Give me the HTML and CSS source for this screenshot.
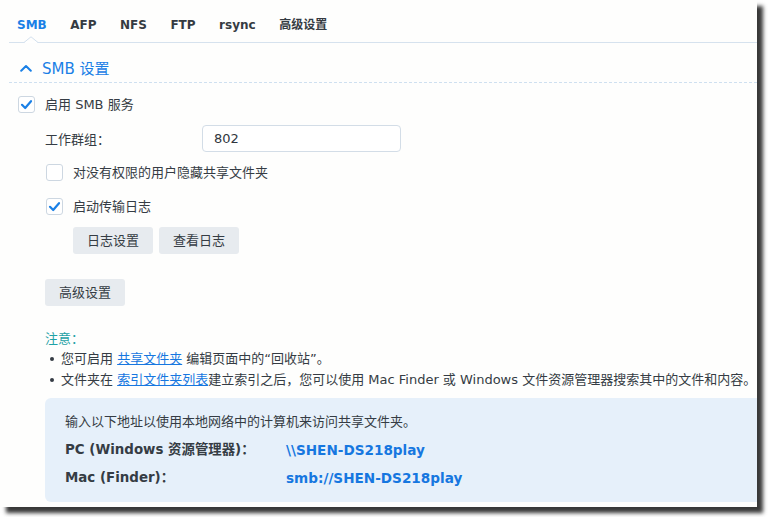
FILE: index.html
```html
<!DOCTYPE html>
<html lang="zh-CN">
<head>
<meta charset="utf-8">
<title>SMB</title>
<link rel="stylesheet" href="styles.css">
</head>
<body>
<div class="window">
  <div class="tabs">
    <span class="tab active">SMB</span>
    <span class="tab">AFP</span>
    <span class="tab">NFS</span>
    <span class="tab">FTP</span>
    <span class="tab">rsync</span>
    <span class="tab">高级设置</span>
    <svg class="notch" width="14" height="7" viewBox="0 0 14 7"><rect x="0.5" y="5.5" width="13" height="1.5" fill="#fff"/><polyline points="0,6.5 7,0.8 14,6.5" fill="none" stroke="#d3e0ee" stroke-width="1"/></svg>
  </div>
  <div class="section-head">
    <svg class="chev" width="12" height="8" viewBox="0 0 12 8"><polyline points="1.2,6.8 6,2 10.8,6.8" fill="none" stroke="#1a80e6" stroke-width="2" stroke-linecap="round" stroke-linejoin="round"/></svg>
    <span>SMB 设置</span>
  </div>
  <div class="content">
    <div class="check-row top">
      <span class="cb"><svg width="17" height="17" viewBox="0 0 17 17"><polyline points="4,8.8 7.2,12 13,5.2" fill="none" stroke="#1a80e6" stroke-width="2.2" stroke-linecap="round" stroke-linejoin="round"/></svg></span>
      <span>启用 SMB 服务</span>
    </div>
    <div class="indent">
      <div class="field-row">
        <span class="field-label">工作群组：</span>
        <div class="input">802</div>
      </div>
      <div class="check-row sub1">
        <span class="cb"></span>
        <span>对没有权限的用户隐藏共享文件夹</span>
      </div>
      <div class="check-row sub2">
        <span class="cb"><svg width="17" height="17" viewBox="0 0 17 17"><polyline points="4,8.8 7.2,12 13,5.2" fill="none" stroke="#1a80e6" stroke-width="2.2" stroke-linecap="round" stroke-linejoin="round"/></svg></span>
        <span>启动传输日志</span>
      </div>
      <div class="btn-row log-btns">
        <span class="btn">日志设置</span>
        <span class="btn">查看日志</span>
      </div>
      <div class="btn-row adv">
        <span class="btn">高级设置</span>
      </div>
      <div class="note-title">注意：</div>
      <ul class="notes">
        <li>您可启用 <a href="#">共享文件夹</a> 编辑页面中的“回收站”。</li>
        <li>文件夹在 <a href="#">索引文件夹列表</a>建立索引之后，您可以使用 Mac Finder 或 Windows 文件资源管理器搜索其中的文件和内容。</li>
      </ul>
      <div class="info">
        <div class="info-row">输入以下地址以使用本地网络中的计算机来访问共享文件夹。</div>
        <div class="info-row"><span class="info-label">PC (Windows 资源管理器)：</span><span class="info-value">\\SHEN-DS218play</span></div>
        <div class="info-row"><span class="info-label">Mac (Finder)：</span><span class="info-value">smb://SHEN-DS218play</span></div>
      </div>
    </div>
  </div>
</div>
</body>
</html>
```
FILE: styles.css
```css
html, body {
  margin: 0;
  padding: 0;
  background: #ffffff;
}
body {
  width: 768px;
  height: 517px;
  overflow: hidden;
  font-family: "DejaVu Sans", "Noto Sans CJK SC", sans-serif;
  font-size: 13px;
  color: #353c44;
}
.window {
  width: 757px;
  height: 507px;
  background: #fefefd;
  box-shadow: 6px 6px 4px rgba(0, 0, 0, 0.78);
  overflow: hidden;
  position: relative;
}
.tabs {
  position: relative;
  margin-left: 9px;
  height: 43px;
  box-sizing: border-box;
  border-bottom: 1px solid #d6e2ee;
  display: flex;
  gap: 23.5px;
  padding: 16px 0 0 8px;
}
.tab {
  font-weight: 700;
  font-size: 12px;
  line-height: 18px;
  color: #353b42;
}
.tab.active {
  color: #1a80e6;
}
.notch {
  position: absolute;
  left: 15px;
  top: 36px;
}
.section-head {
  margin-left: 9px;
  height: 40px;
  box-sizing: border-box;
  border-bottom: 1px dashed #cfe0f0;
  display: flex;
  align-items: center;
  gap: 10px;
  padding: 10px 0 0 11px;
  font-size: 15px;
  color: #1a80e6;
}
.chev {
  display: block;
}
.content {
  padding-top: 13px;
}
.check-row {
  display: flex;
  align-items: center;
  gap: 10px;
  height: 17px;
  line-height: 17px;
}
.check-row.top {
  margin-left: 18px;
}
.cb {
  width: 17px;
  height: 17px;
  box-sizing: border-box;
  border: 1px solid #cdd7e1;
  border-radius: 3px;
  background: #fff;
  position: relative;
  flex: none;
}
.cb svg {
  position: absolute;
  left: -1px;
  top: -1px;
}
.indent {
  margin-left: 45px;
}
.field-row {
  margin-top: 12px;
  display: flex;
  align-items: center;
  height: 27px;
}
.field-label {
  width: 157px;
}
.input {
  width: 199px;
  height: 27px;
  box-sizing: border-box;
  border: 1px solid #d3dde7;
  border-radius: 4px;
  background: #fff;
  padding-left: 11px;
  line-height: 25px;
  font-size: 13px;
  color: #30363d;
}
.check-row.sub1 {
  margin-top: 12px;
  margin-left: 1px;
}
.check-row.sub2 {
  margin-top: 17px;
  margin-left: 1px;
}
.btn-row {
  display: flex;
  gap: 6px;
}
.log-btns {
  margin-top: 12px;
  margin-left: 28px;
}
.adv {
  margin-top: 25px;
}
.btn {
  width: 80px;
  height: 27px;
  line-height: 27px;
  text-align: center;
  background: #e7ebef;
  border-radius: 3px;
  color: #353c44;
}
.note-title {
  margin-top: 23px;
  line-height: 20px;
  color: #1fa2a6;
}
.notes {
  list-style: none;
  margin: 0;
  padding: 0;
}
.notes li {
  position: relative;
  padding-left: 16px;
  line-height: 20.5px;
  white-space: nowrap;
}
.notes li::before {
  content: "";
  position: absolute;
  left: 5px;
  top: 8px;
  width: 4px;
  height: 4px;
  border-radius: 50%;
  background: #353c44;
}
.notes a {
  color: #1677e0;
  text-decoration: underline;
}
.info {
  margin-top: 8px;
  height: 104px;
  box-sizing: border-box;
  background: #e6f0fa;
  border-radius: 6px 0 0 6px;
  padding: 10px 0 0 20px;
}
.info-row {
  display: flex;
  line-height: 28px;
}
.info-label {
  width: 221px;
  font-weight: 700;
  font-size: 13.4px;
}
.info-value {
  font-weight: 700;
  font-size: 13.6px;
  color: #1677e0;
}
```
